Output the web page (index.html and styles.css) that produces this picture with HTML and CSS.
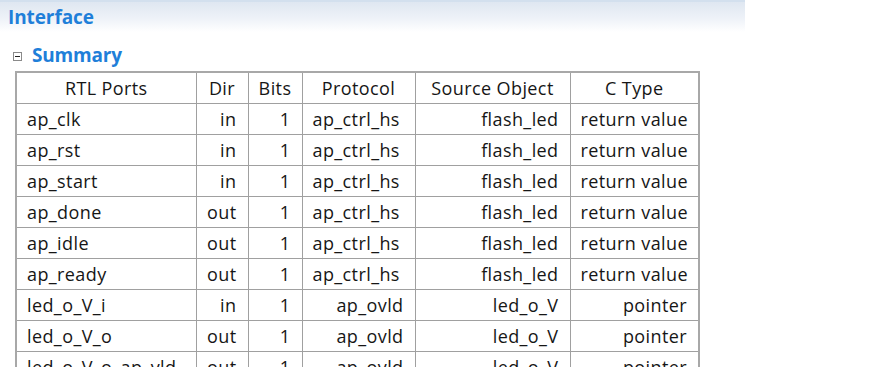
FILE: index.html
```html
<!DOCTYPE html>
<html>
<head>
<meta charset="utf-8">
<link rel="stylesheet" href="styles.css">
</head>
<body>
<div class="band"><span class="band-title">Interface</span></div>
<div class="section">
  <div class="section-head"><span class="toggle"></span><span class="section-title">Summary</span></div>
  <table class="ports">
    <colgroup>
      <col class="c1"><col class="c2"><col class="c3"><col class="c4"><col class="c5"><col class="c6">
    </colgroup>
    <thead>
      <tr><th>RTL Ports</th><th>Dir</th><th>Bits</th><th>Protocol</th><th>Source Object</th><th>C Type</th></tr>
    </thead>
    <tbody>
      <tr><td>ap_clk</td><td class="r">in</td><td class="r">1</td><td>ap_ctrl_hs</td><td class="r">flash_led</td><td>return value</td></tr>
      <tr><td>ap_rst</td><td class="r">in</td><td class="r">1</td><td>ap_ctrl_hs</td><td class="r">flash_led</td><td>return value</td></tr>
      <tr><td>ap_start</td><td class="r">in</td><td class="r">1</td><td>ap_ctrl_hs</td><td class="r">flash_led</td><td>return value</td></tr>
      <tr><td>ap_done</td><td class="r">out</td><td class="r">1</td><td>ap_ctrl_hs</td><td class="r">flash_led</td><td>return value</td></tr>
      <tr><td>ap_idle</td><td class="r">out</td><td class="r">1</td><td>ap_ctrl_hs</td><td class="r">flash_led</td><td>return value</td></tr>
      <tr><td>ap_ready</td><td class="r">out</td><td class="r">1</td><td>ap_ctrl_hs</td><td class="r">flash_led</td><td>return value</td></tr>
      <tr><td>led_o_V_i</td><td class="r">in</td><td class="r">1</td><td class="r">ap_ovld</td><td class="r">led_o_V</td><td class="r">pointer</td></tr>
      <tr><td>led_o_V_o</td><td class="r">out</td><td class="r">1</td><td class="r">ap_ovld</td><td class="r">led_o_V</td><td class="r">pointer</td></tr>
      <tr><td>led_o_V_o_ap_vld</td><td class="r">out</td><td class="r">1</td><td class="r">ap_ovld</td><td class="r">led_o_V</td><td class="r">pointer</td></tr>
    </tbody>
  </table>
</div>
</body>
</html>
```
FILE: styles.css
```css
html, body {
  margin: 0;
  padding: 0;
  background: #ffffff;
  overflow: hidden;
}
body {
  font-family: "Open Sans", "Noto Sans", sans-serif;
  color: #161616;
}
.band {
  width: 745px;
  height: 32px;
  box-sizing: border-box;
  border-top: 2px solid #d3e0ee;
  background: linear-gradient(to bottom, #dfe7f1 0%, #eef2f8 55%, #ffffff 100%);
  padding-left: 8px;
  display: flex;
  align-items: center;
}
.band-title {
  font-size: 19px;
  font-weight: 700;
  color: #1f7fd9;
  letter-spacing: -0.1px;
}
.section {
  padding-left: 15px;
  padding-top: 9px;
}
.section-head {
  display: flex;
  align-items: center;
  height: 28px;
  margin-left: -2px;
}
.toggle {
  width: 9px;
  height: 9px;
  box-sizing: border-box;
  border: 1px solid #8a8a8a;
  background: #fff;
  position: relative;
  margin-right: 10px;
  margin-top: 2px;
}
.toggle::after {
  content: "";
  position: absolute;
  left: 1px;
  right: 1px;
  top: 3px;
  height: 1px;
  background: #222;
}
.section-title {
  font-size: 19px;
  font-weight: 700;
  color: #1f7fd9;
  letter-spacing: -0.2px;
}
.ports {
  border-collapse: collapse;
  table-layout: fixed;
  width: 683px;
  margin-top: 2px;
  border: 2px solid #a8a8a8;
  font-size: 18px;
  letter-spacing: 0.4px;
}
.c1 { width: 180px; }
.c2 { width: 52px; }
.c3 { width: 54px; }
.c4 { width: 113px; }
.c5 { width: 155px; }
.c6 { width: 129px; }
.ports th, .ports td {
  border: 1px solid #a0a0a0;
  height: 30px;
  padding: 0 10px;
  white-space: nowrap;
  overflow: hidden;
  text-align: left;
  font-weight: 400;
  line-height: 20px;
}
.ports th {
  text-align: center;
}
.ports td.r {
  text-align: right;
  padding-right: 11px;
}
```
